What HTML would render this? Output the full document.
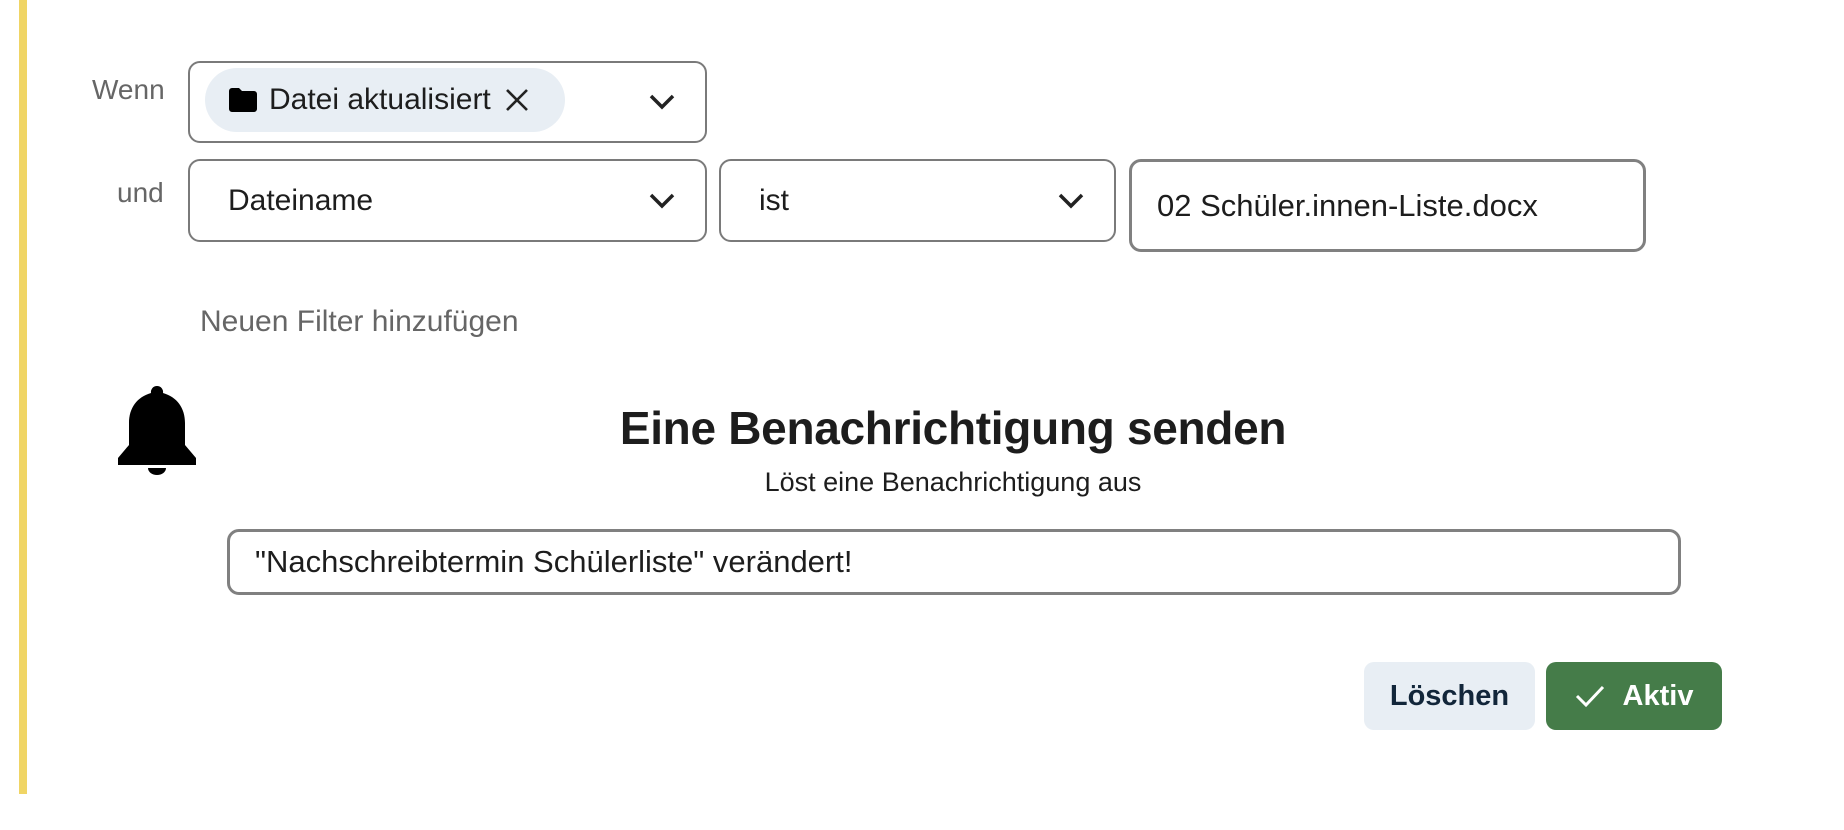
<!DOCTYPE html>
<html><head><meta charset="utf-8"><style>
*{box-sizing:border-box;margin:0;padding:0}
body{width:1844px;height:830px;background:#fff;font-family:"Liberation Sans",sans-serif;color:#1d1d1d;position:relative;overflow:hidden}
.a{position:absolute}
.bar{left:19px;top:0;width:8px;height:794px;background:#f0d565}
.lbl{font-size:28px;color:#666;}
.box{border:2px solid #7a7a7a;border-radius:12px;background:#fff}
.sel{font-size:30px;display:flex;align-items:center;padding-left:38px}
.chev{position:absolute;right:30px;top:50%;margin-top:-9px}
.inp{border:3px solid #808080;border-radius:12px;font-size:31px;display:flex;align-items:center;padding-left:25px}
</style></head><body>
<div class="a bar"></div>
<div class="a lbl" style="left:92px;top:74px">Wenn</div>
<div class="a lbl" style="left:117px;top:177px">und</div>
<div class="a box" style="left:188px;top:61px;width:519px;height:82px">
  <div class="a" style="left:15px;top:5px;width:360px;height:64px;background:#e8eef4;border-radius:32px;display:flex;align-items:center;font-size:30px;padding-left:24px">
    <svg width="28" height="24" viewBox="0 0 28 24" style="margin-right:12px"><path d="M0 3a3 3 0 0 1 3-3h7l3 3h12a3 3 0 0 1 3 3v15a3 3 0 0 1-3 3H3a3 3 0 0 1-3-3z" fill="#000"/></svg>
    Datei aktualisiert
    <svg width="24" height="24" viewBox="0 0 24 24" style="margin-left:14px"><path d="M2 2L22 22M22 2L2 22" stroke="#222" stroke-width="2.6"/></svg>
  </div>
  <svg class="chev" width="26" height="18" viewBox="0 0 26 18"><path d="M2 3L13 14L24 3" fill="none" stroke="#222" stroke-width="3.5"/></svg>
</div>
<div class="a box sel" style="left:188px;top:159px;width:519px;height:83px">Dateiname
  <svg class="chev" width="26" height="18" viewBox="0 0 26 18"><path d="M2 3L13 14L24 3" fill="none" stroke="#222" stroke-width="3.5"/></svg></div>
<div class="a box sel" style="left:719px;top:159px;width:397px;height:83px">ist
  <svg class="chev" width="26" height="18" viewBox="0 0 26 18"><path d="M2 3L13 14L24 3" fill="none" stroke="#222" stroke-width="3.5"/></svg></div>
<div class="a inp" style="left:1129px;top:159px;width:517px;height:93px">02 Schüler.innen-Liste.docx</div>
<div class="a lbl" style="left:200px;top:305px;font-size:30px">Neuen Filter hinzufügen</div>
<svg class="a" style="left:118px;top:386px" width="78" height="89" viewBox="0 0 78 89"><path d="M39 0a6 6 0 0 1 6 7c14 4 22 15 22 30v22l11 13v7H0v-7l11-13V37C11 22 19 11 33 7a6 6 0 0 1 6-7z" fill="#000"/><path d="M30 82h18a9 7 0 0 1-18 0z" fill="#000"/></svg>
<div class="a" style="left:0;width:1906px;top:401px;text-align:center;font-size:46px;font-weight:bold;letter-spacing:-0.3px">Eine Benachrichtigung senden</div>
<div class="a" style="left:0;width:1906px;top:467px;text-align:center;font-size:27px">Löst eine Benachrichtigung aus</div>
<div class="a inp" style="left:227px;top:529px;width:1454px;height:66px">"Nachschreibtermin Schülerliste" verändert!</div>
<div class="a" style="left:1364px;top:662px;width:171px;height:68px;background:#e8eef4;border-radius:10px;display:flex;align-items:center;justify-content:center;font-size:29px;font-weight:bold;color:#12263a">Löschen</div>
<div class="a" style="left:1546px;top:662px;width:176px;height:68px;background:#457c49;border-radius:10px;display:flex;align-items:center;justify-content:center;font-size:29px;font-weight:bold;color:#fff">
<svg width="30" height="24" viewBox="0 0 30 24" style="margin-right:18px"><path d="M2 12L11 21L28 3" fill="none" stroke="#fff" stroke-width="3"/></svg>Aktiv</div>
</body></html>
